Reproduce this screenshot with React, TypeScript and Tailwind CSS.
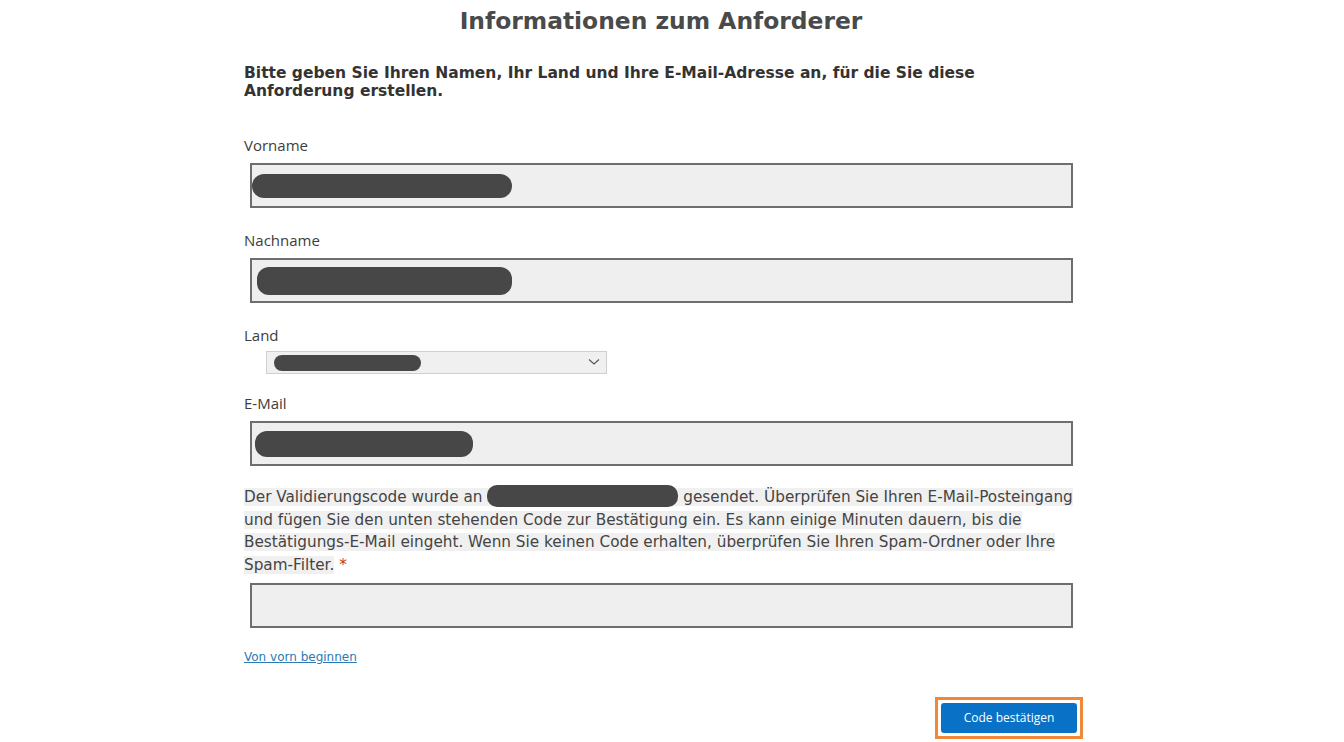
import React from "react";

const verdana = { fontFamily: '"DejaVu Sans", Verdana, sans-serif' };

function Blob({ w, h = 24, ml = 0 }: { w: number; h?: number; ml?: number }) {
  return (
    <div
      className="rounded-[12px] bg-[#474747]"
      style={{ width: w, height: h, marginLeft: ml }}
    />
  );
}

function Label({ children }: { children: React.ReactNode }) {
  return (
    <div className="text-[15px] leading-[20px] text-[#3d3d3d] font-['Open_Sans',sans-serif]">{children}</div>
  );
}

function Field({ label, blob, blobMl, blobH, mt }: { label: string; blob?: number; blobMl?: number; blobH?: number; mt: string }) {
  return (
    <div className={mt}>
      <Label>{label}</Label>
      <div className="ml-[6px] mt-[8px] flex h-[45px] w-[823px] items-center border-2 border-[#6e6e6e] bg-[#efefef]">
        {blob ? <Blob w={blob} ml={blobMl} h={blobH} /> : null}
      </div>
    </div>
  );
}

export default function App() {
  return (
    <div className="min-h-[742px] w-full bg-white text-[#444]" style={verdana}>
      <div className="pt-[6px] text-center text-[23.4px] font-bold leading-[30px] text-[#4a4a4a]">
        <span className="relative left-[-11px]">Informationen zum Anforderer</span>
      </div>
      <div className="pl-[244px]">
        <div className="mt-[28px] w-[820px] text-[15.5px] font-bold leading-[18px] text-[#333]">
          Bitte geben Sie Ihren Namen, Ihr Land und Ihre E-Mail-Adresse an, für die Sie diese Anforderung erstellen.
        </div>

        <Field label="Vorname" blob={260} blobMl={0} mt="mt-[35px]" />
        <Field label="Nachname" blob={255} blobMl={5} blobH={28} mt="mt-[22px]" />

        <div className="mt-[22px]">
          <Label>Land</Label>
          <div className="ml-[22px] mt-[6px] flex h-[23px] w-[341px] items-center justify-between border border-[#cfcfcf] bg-[#f0f0f0] pr-[6px]">
            <Blob w={147} h={16} ml={7} />
            <svg width="12" height="8" viewBox="0 0 12 8" className="mt-[-2px]">
              <path d="M1 1.5 L6 6 L11 1.5" fill="none" stroke="#555" strokeWidth="1.2" />
            </svg>
          </div>
        </div>

        <Field label="E-Mail" blob={218} blobMl={3} blobH={26} mt="mt-[19px]" />

        <div className="mt-[14px] w-[850px] text-[15.25px] leading-[22.5px] text-[#444]">
          <span className="bg-[#f0f0f0] box-decoration-clone">
            Der Validierungscode wurde an{" "}
            <span className="inline-block h-[22px] w-[191px] translate-y-[5px] rounded-[10px] bg-[#474747] align-baseline" />{" "}
            gesendet. Überprüfen Sie Ihren E-Mail-Posteingang und fügen Sie den unten stehenden Code zur Bestätigung ein. Es kann einige Minuten dauern, bis die Bestätigungs-E-Mail eingeht. Wenn Sie keinen Code erhalten, überprüfen Sie Ihren Spam-Ordner oder Ihre Spam-Filter.
          </span>{" "}
          <span className="text-[#c0392b]">*</span>
        </div>

        <div className="ml-[6px] mt-[7px] h-[45px] w-[823px] border-2 border-[#6e6e6e] bg-[#efefef]" />

        <div className="mt-[21px] text-[12px] leading-[16px]">
          <a href="#" className="text-[#2a7ab5] underline">Von vorn beginnen</a>
        </div>

        <div className="mt-[32px] flex w-[839px] justify-end">
          <div className="border-[3px] border-[#f0883a] p-[3px]">
            <button className="h-[30px] w-[136px] rounded-[3px] bg-[#0a72c6] text-[12px] text-white" style={{ fontFamily: '"Open Sans", sans-serif' }}>
              Code bestätigen
            </button>
          </div>
        </div>
      </div>
    </div>
  );
}
